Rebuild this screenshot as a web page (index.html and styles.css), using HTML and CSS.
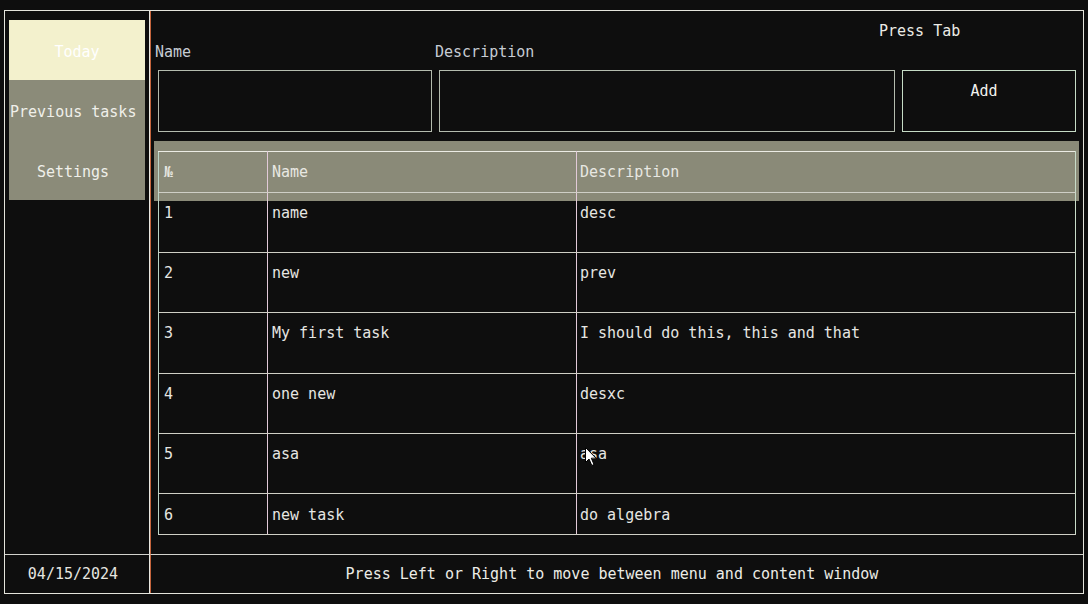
FILE: index.html
```html
<!DOCTYPE html>
<html>
<head>
<meta charset="utf-8">
<link rel="stylesheet" href="styles.css">
</head>
<body>
<div class="frame">
  <nav class="sidebar">
    <div class="menu-item active">Today</div>
    <div class="menu-item wide">Previous tasks</div>
    <div class="menu-item shifted">Settings</div>
  </nav>
  <main class="content">
    <div class="form">
      <div class="hint">Press Tab</div>
      <div class="label label-name">Name</div>
      <div class="label label-desc">Description</div>
      <div class="input"></div>
      <div class="input"></div>
      <div class="button">Add</div>
    </div>
    <div class="table-wrap">
      <table class="tasks">
        <colgroup><col class="c1"><col class="c2"><col class="c3"></colgroup>
        <tr class="head"><td>№</td><td>Name</td><td>Description</td></tr>
        <tr><td>1</td><td>name</td><td>desc</td></tr>
        <tr><td>2</td><td>new</td><td>prev</td></tr>
        <tr class="tall"><td>3</td><td>My first task</td><td>I should do this, this and that</td></tr>
        <tr><td>4</td><td>one new</td><td>desxc</td></tr>
        <tr><td>5</td><td>asa</td><td>asa</td></tr>
        <tr class="last"><td>6</td><td>new task</td><td>do algebra</td></tr>
      </table>
    </div>
  </main>
  <div class="foot-date">04/15/2024</div>
  <div class="foot-msg">Press Left or Right to move between menu and content window</div>
</div>
<svg class="cursor" width="13" height="20" viewBox="0 0 13 20"><path d="M0.5 0.5 L0.5 15.5 L4 12 L6.8 18.5 L9 17.5 L6.3 11.2 L11 11.2 Z" fill="#fff" stroke="#000" stroke-width="1"/></svg>
</body>
</html>
```
FILE: styles.css
```css
html, body {
  margin: 0;
  padding: 0;
  background: #0e0e0e;
}
body {
  font-family: "DejaVu Sans Mono", "Liberation Mono", monospace;
  font-size: 15px;
  line-height: 20px;
  color: #e6e6e2;
  width: 1088px;
  height: 604px;
  overflow: hidden;
}
.frame {
  margin: 10px 0 0 4px;
  width: 1080px;
  height: 584px;
  box-sizing: border-box;
  border: 1px solid #e4e4dc;
  display: grid;
  grid-template-columns: 145px 1fr;
  grid-template-rows: 543px 1fr;
}
.sidebar {
  box-sizing: border-box;
  padding: 9px 4px 0 4px;
  border-right: 1px solid #e8e8e2;
  display: flex;
  flex-direction: column;
}
.menu-item {
  height: 60px;
  background: #8b8b79;
  color: #f0f0ea;
  display: flex;
  align-items: center;
  justify-content: center;
  padding-top: 3px;
  box-sizing: border-box;
}
.menu-item.wide {
  justify-content: flex-start;
  padding-left: 1px;
}
.menu-item.shifted {
  padding-right: 8px;
}
.menu-item.active {
  background: #f3f1cd;
  color: #ffffff;
}
.content {
  box-sizing: border-box;
  border-left: 1px solid #c4643c;
  padding: 10px 0 0 7px;
}
.form {
  display: grid;
  grid-template-columns: 274px 456px 174px;
  grid-template-rows: 20px 29px 62px;
  column-gap: 7px;
}
.hint {
  grid-column: 3;
  grid-row: 1;
  margin-left: -23px;
  color: #ecece6;
}
.label {
  grid-row: 2;
  color: #c6ccd4;
  align-self: start;
  margin-top: 1px;
}
.label-name { grid-column: 1; margin-left: -3px; }
.label-desc { grid-column: 2; margin-left: -4px; }
.input, .button {
  grid-row: 3;
  box-sizing: border-box;
  border: 1px solid #b4bcae;
}
.button {
  border-color: #c6dcc6;
  text-align: center;
  padding: 10px 10px 0 0;
  color: #f2f2ee;
}
.table-wrap {
  margin: 9px 0 0 -4px;
  width: 925px;
  box-sizing: border-box;
  padding: 10px 3px 0 4px;
  background: linear-gradient(to bottom, #8a8a78 0, #8a8a78 60px, transparent 60px);
}
.tasks {
  width: 917px;
  table-layout: fixed;
  border-collapse: collapse;
  border: 1px solid #d0d0c8;
}
.tasks col.c1 { width: 109px; }
.tasks col.c2 { width: 309px; }
.tasks col.c3 { width: 499px; }
.tasks td {
  vertical-align: top;
  padding: 10px 0 0 4px;
  height: 60px;
  box-sizing: border-box;
  border-top: 1px solid #cfcfc6;
  border-bottom: 1px solid #cfcfc6;
  border-left: 1px solid #e2cad8;
  border-right: 1px solid #e2cad8;
  white-space: pre;
}
.tasks td:first-child { border-left-color: #bcd6c8; padding-left: 5px; }
.tasks td:last-child { border-right-color: #c8dcc8; padding-left: 3px; }
.tasks tr.head td {
  height: 41px;
  color: #e8e8e2;
  border-top-color: #ecece4;
}
.tasks tr.tall td { height: 61px; }
.tasks tr.last td { height: 41px; padding-top: 11px; }
.foot-date {
  border-top: 1px solid #d2d2cc;
  border-right: 1px solid #e8e8e2;
  display: flex;
  align-items: center;
  justify-content: center;
  padding-right: 8px;
  color: #e6e6e0;
}
.foot-msg {
  border-top: 1px solid #d2d2cc;
  border-left: 1px solid #c4643c;
  display: flex;
  align-items: center;
  justify-content: center;
  padding-right: 10px;
  color: #ecece6;
}
.cursor {
  position: absolute;
  left: 585px;
  top: 447px;
}
```
